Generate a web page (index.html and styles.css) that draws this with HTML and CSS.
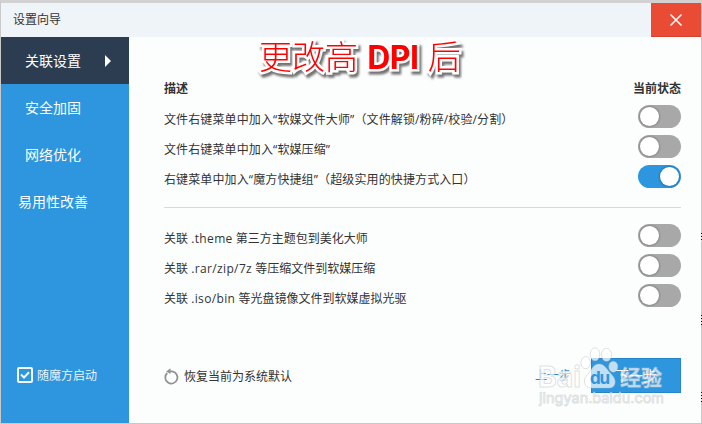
FILE: index.html
```
<!doctype html>
<html lang="zh-CN">
<head>
<meta charset="utf-8">
<title>设置向导</title>
<link rel="stylesheet" href="styles.css">
</head>

<body>
<div class="window">
	<div class="titlebar">
		<span class="title">设置向导</span>
		<a class="close"><svg width="12" height="12" viewBox="0 0 12 12"><path d="M.5 .5L11.5 11.5M11.5 .5L.5 11.5" stroke="#fff" stroke-width="1.5"/></svg></a>
	</div>
	<div class="main">
		<div class="side">
			<ul class="nav">
				<li class="active">关联设置<i class="arrow"></i></li>
				<li>安全加固</li>
				<li>网络优化</li>
				<li>易用性改善</li>
			</ul>
			<label class="startup">
				<svg width="16" height="16" viewBox="0 0 16 16" fill="none" stroke="#f3f7fa"><rect x="1" y="1" width="14" height="14" rx="1" stroke-width="2"/><path d="M4 7.5L7 10.5L12 5.2" stroke-width="2"/></svg>
				<span>随魔方启动</span>
			</label>
		</div>
		<div class="content">
			<div class="head"><span>描述</span><span>当前状态</span></div>
			<ul class="list first">
				<li><span>文件右键菜单中加入“软媒文件大师”（文件解锁/粉碎/校验/分割）</span><i class="switch"></i></li>
				<li><span>文件右键菜单中加入“软媒压缩”</span><i class="switch"></i></li>
				<li><span>右键菜单中加入“魔方快捷组”（超级实用的快捷方式入口）</span><i class="switch on"></i></li>
			</ul>
			<ul class="list second">
				<li><span>关联 <em>.theme</em> 第三方主题包到美化大师</span><i class="switch"></i></li>
				<li><span>关联 <em>.rar/zip/7z</em> 等压缩文件到软媒压缩</span><i class="switch"></i></li>
				<li><span>关联 <em>.iso/bin</em> 等光盘镜像文件到软媒虚拟光驱</span><i class="switch"></i></li>
			</ul>
			<div class="foot">
				<a class="reset">
					<svg width="16" height="16" viewBox="0 0 16 16"><path d="M3.2 4A6.1 6.1 0 1 0 8 2.4H5.5" fill="none" stroke="#929292" stroke-width="1.8"/><path d="M2.2 2.4L6.5 -.8V5z" fill="#929292"/></svg>
					<span>恢复当前为系统默认</span>
				</a>
				<a class="prev">上一步</a>
				<a class="next">下一步</a>
			</div>
		</div>
	</div>
</div>
<div class="caption">更改高 <b>DPI</b> 后</div>
<svg class="watermark" width="140" height="78" viewBox="0 0 140 78">
	<g class="paw">
		<ellipse cx="49.7" cy="30.7" rx="4.8" ry="6"/>
		<ellipse cx="59" cy="22.3" rx="4.8" ry="6.5"/>
		<ellipse cx="70.5" cy="22.8" rx="5" ry="6.5"/>
		<ellipse cx="77.3" cy="34.7" rx="4.5" ry="5.5"/>
		<path d="M63 32C57 32 56 38 52 42C46 47 48 56 55 56H73C80 56 81 48 76 43C71 38 69 32 63 32z"/>
	</g>
	<text class="wm-bai" x="2" y="54.5" textLength="43" lengthAdjust="spacingAndGlyphs">Bai</text>
	<text class="wm-du" x="54" y="52" textLength="20">du</text>
	<text class="wm-cn" x="84" y="53" textLength="42">经验</text>
	<text class="wm-url" x="3" y="71" textLength="125" lengthAdjust="spacingAndGlyphs">jingyan.baidu.com</text>
</svg>
<i class="speck s1"></i>
<i class="speck s2"></i>
<i class="speck s3"></i>
</body>
</html>
```
FILE: styles.css
```
*{margin:0; padding:0; list-style:none; box-sizing:border-box;}
body{height:424px; overflow:hidden; position:relative; background:#fcfefd; color:#333; font:12px/18px "Open Sans","Noto Sans CJK SC",sans-serif; text-spacing-trim:space-all; font-kerning:none;}
i,em{font-style:normal;}
svg{display:block; flex:none; overflow:visible;}
.window{height:424px; display:flex; flex-direction:column; border:1px solid #c9c9c9; border-top:3px solid #d2d2d2;}
.titlebar{height:34px; flex:none; display:flex; align-items:center; background:#eff4f9;}
.title{flex:1; padding-left:12px;}
.close{width:50px; height:34px; display:flex; align-items:center; justify-content:center; background:#e94b35; border-bottom:1px solid #d3432f;}
.main{flex:1; display:flex;}

.side{width:128px; display:flex; flex-direction:column; justify-content:space-between; background:#2d96de; color:#fff;}
.nav{font-size:14px;}
.nav li{height:47px; padding-right:24px; display:flex; align-items:center; justify-content:center; position:relative;}
.nav .active{background:#2c3d51;}
.arrow{position:absolute; left:104px; top:18px; border:6px solid transparent; border-left-color:#fff; border-right:0;}
.startup{display:flex; align-items:center; gap:4px; padding:0 0 38px 16px; color:#e8f3fb;}
.startup span{padding-top:2px;}

.content{flex:1; display:flex; flex-direction:column; padding:43px 20px 30px 35px;}
.head{display:flex; justify-content:space-between; font-weight:bold;}
.list{padding-top:4px;}
.list li{height:30px; display:flex; align-items:center; justify-content:space-between; white-space:nowrap;}
.list li span{padding-top:6px;}
.list em{letter-spacing:.37px;}
.first{letter-spacing:.12px;}
.second{margin-top:15px; padding-top:13px; border-top:1px solid #d8dada;}
.switch{width:43px; height:23px; margin-top:-1px; border-radius:12px; padding:2px; display:flex; background:#a8a8a8;}
.switch:before{content:""; width:19px; height:19px; border-radius:50%; background:#fff; box-shadow:0 0 2px 1px rgba(0,0,0,.2);}
.on{background:#2d96de; justify-content:flex-end;}
.foot{margin-top:auto; height:35px; display:flex; align-items:center;}
.reset{flex:1; display:flex; align-items:center; gap:4px; padding-top:3px;}
.prev{padding-right:20px; color:#2d86c8;}
.next{width:90px; height:35px; line-height:33px; text-align:center; font-size:14px; color:#fff; background:#2d96de; border:1px solid #2485c8;}

.caption{position:absolute; left:259px; top:36px; white-space:pre; font:300 33px/44px "Liberation Sans","Noto Sans CJK SC",sans-serif; color:#f00; -webkit-text-stroke:5px #fff; paint-order:stroke fill; filter:drop-shadow(2px 3px 1px rgba(0,0,0,.55));}
.caption b{font:bold 32px/44px Inter,"Liberation Sans",sans-serif; letter-spacing:-.5px;}

.watermark{position:absolute; left:536px; top:332px; font-family:Inter,"Noto Sans CJK SC",sans-serif; font-weight:bold;}
.watermark text,.paw{fill:rgba(255,255,255,.7); stroke:rgba(185,190,195,.45); stroke-width:1px;}
.watermark .wm-bai{font-size:28px;}
.watermark .wm-du{font-size:17px; fill:#2d96de; stroke:none;}
.watermark .wm-cn{font-size:21px;}
.watermark .wm-url{font-size:14px; font-weight:normal;}

.speck{position:absolute; right:0; width:1px; background:repeating-linear-gradient(#111 0 1px,#ddd 1px 3px);}
.s1{top:233px; height:9px;}
.s2{top:315px; height:10px;}
.s3{top:392px; height:10px;}
```
